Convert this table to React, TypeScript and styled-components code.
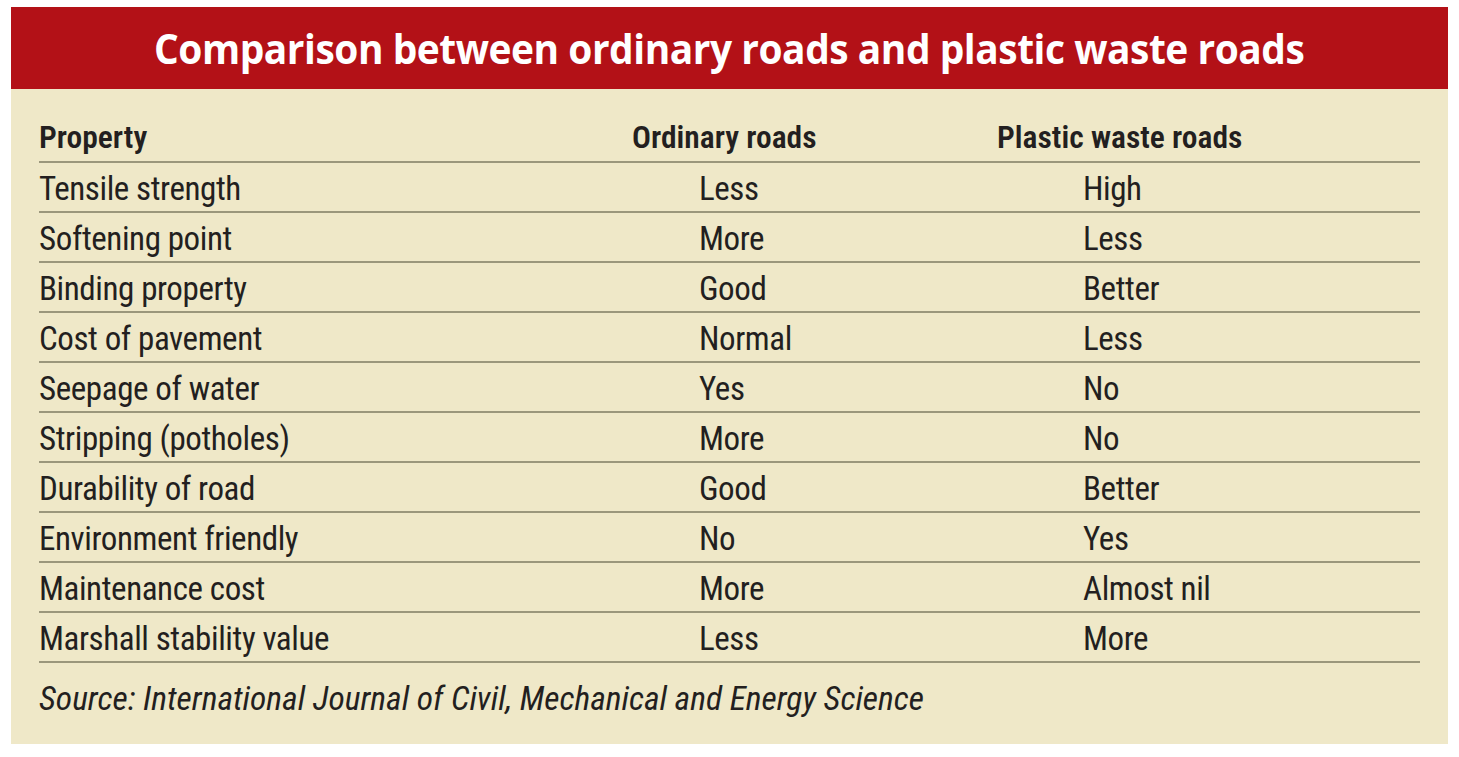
import React from 'react';
import styled, { createGlobalStyle, css } from 'styled-components';

const rows: [string, string, string][] = [
  ['Tensile strength', 'Less', 'High'],
  ['Softening point', 'More', 'Less'],
  ['Binding property', 'Good', 'Better'],
  ['Cost of pavement', 'Normal', 'Less'],
  ['Seepage of water', 'Yes', 'No'],
  ['Stripping (potholes)', 'More', 'No'],
  ['Durability of road', 'Good', 'Better'],
  ['Environment friendly', 'No', 'Yes'],
  ['Maintenance cost', 'More', 'Almost nil'],
  ['Marshall stability value', 'Less', 'More'],
];

const App = () => {
  return (
    <>
      <GlobalStyle />
      <Card>
        <Header>
          <Title>Comparison between ordinary roads and plastic waste roads</Title>
        </Header>
        <Body>
          <Table>
            <Row head>
              <Cell head>Property</Cell>
              <Cell head>Ordinary roads</Cell>
              <Cell head>Plastic waste roads</Cell>
            </Row>
            {rows.map(([prop, ordinary, plastic]) => (
              <Row key={prop}>
                <Cell>{prop}</Cell>
                <Cell indent={67}>{ordinary}</Cell>
                <Cell indent={86}>{plastic}</Cell>
              </Row>
            ))}
          </Table>
          <Source>Source: International Journal of Civil, Mechanical and Energy Science</Source>
        </Body>
      </Card>
    </>
  );
};

const GlobalStyle = createGlobalStyle`
  body {
    margin: 0;
    background: #ffffff;
  }
`;

const Card = styled.div`
  margin: 7px 11px 0;
  background-color: #efe8c8;
  font-family: 'Roboto Condensed', 'Liberation Sans', sans-serif;
  color: #231f20;
`;

const Header = styled.div`
  height: 82px;
  background-color: #b31117;
  display: flex;
  align-items: center;
  justify-content: center;
`;

// semi-condensed look: the installed Open Sans only snaps to 75% or 100%
const Title = styled.h1`
  margin: 0;
  color: #ffffff;
  font-family: 'Open Sans', sans-serif;
  font-size: 42px;
  font-weight: bold;
  letter-spacing: -0.5px;
  line-height: 1;
  white-space: nowrap;
  transform: scaleX(0.926);
`;

const Body = styled.div`
  padding: 0 28px 25px;
`;

const Table = styled.div`
  display: flex;
  flex-direction: column;
`;

const Row = styled.div`
  display: grid;
  grid-template-columns: 593px 365px 1fr;
  border-bottom: 2px solid #9b977c;
  height: 48px;
  align-items: end;

  ${(props: { head?: boolean }) =>
    props.head &&
    css`
      height: 72px;
    `}
`;

const Cell = styled.div`
  font-size: 33px;
  letter-spacing: -0.4px;
  line-height: 40px;
  padding-bottom: 2px;
  padding-left: ${(props: { head?: boolean; indent?: number }) => props.indent || 0}px;

  ${(props: { head?: boolean; indent?: number }) =>
    props.head &&
    css`
      font-size: 31.5px;
      letter-spacing: 0;
      font-weight: 600;
      line-height: 36px;
      padding-bottom: 5px;
    `}
`;

const Source = styled.div`
  margin-top: 16px;
  font-size: 33.5px;
  font-style: italic;
  line-height: 40px;
`;

export default App;
